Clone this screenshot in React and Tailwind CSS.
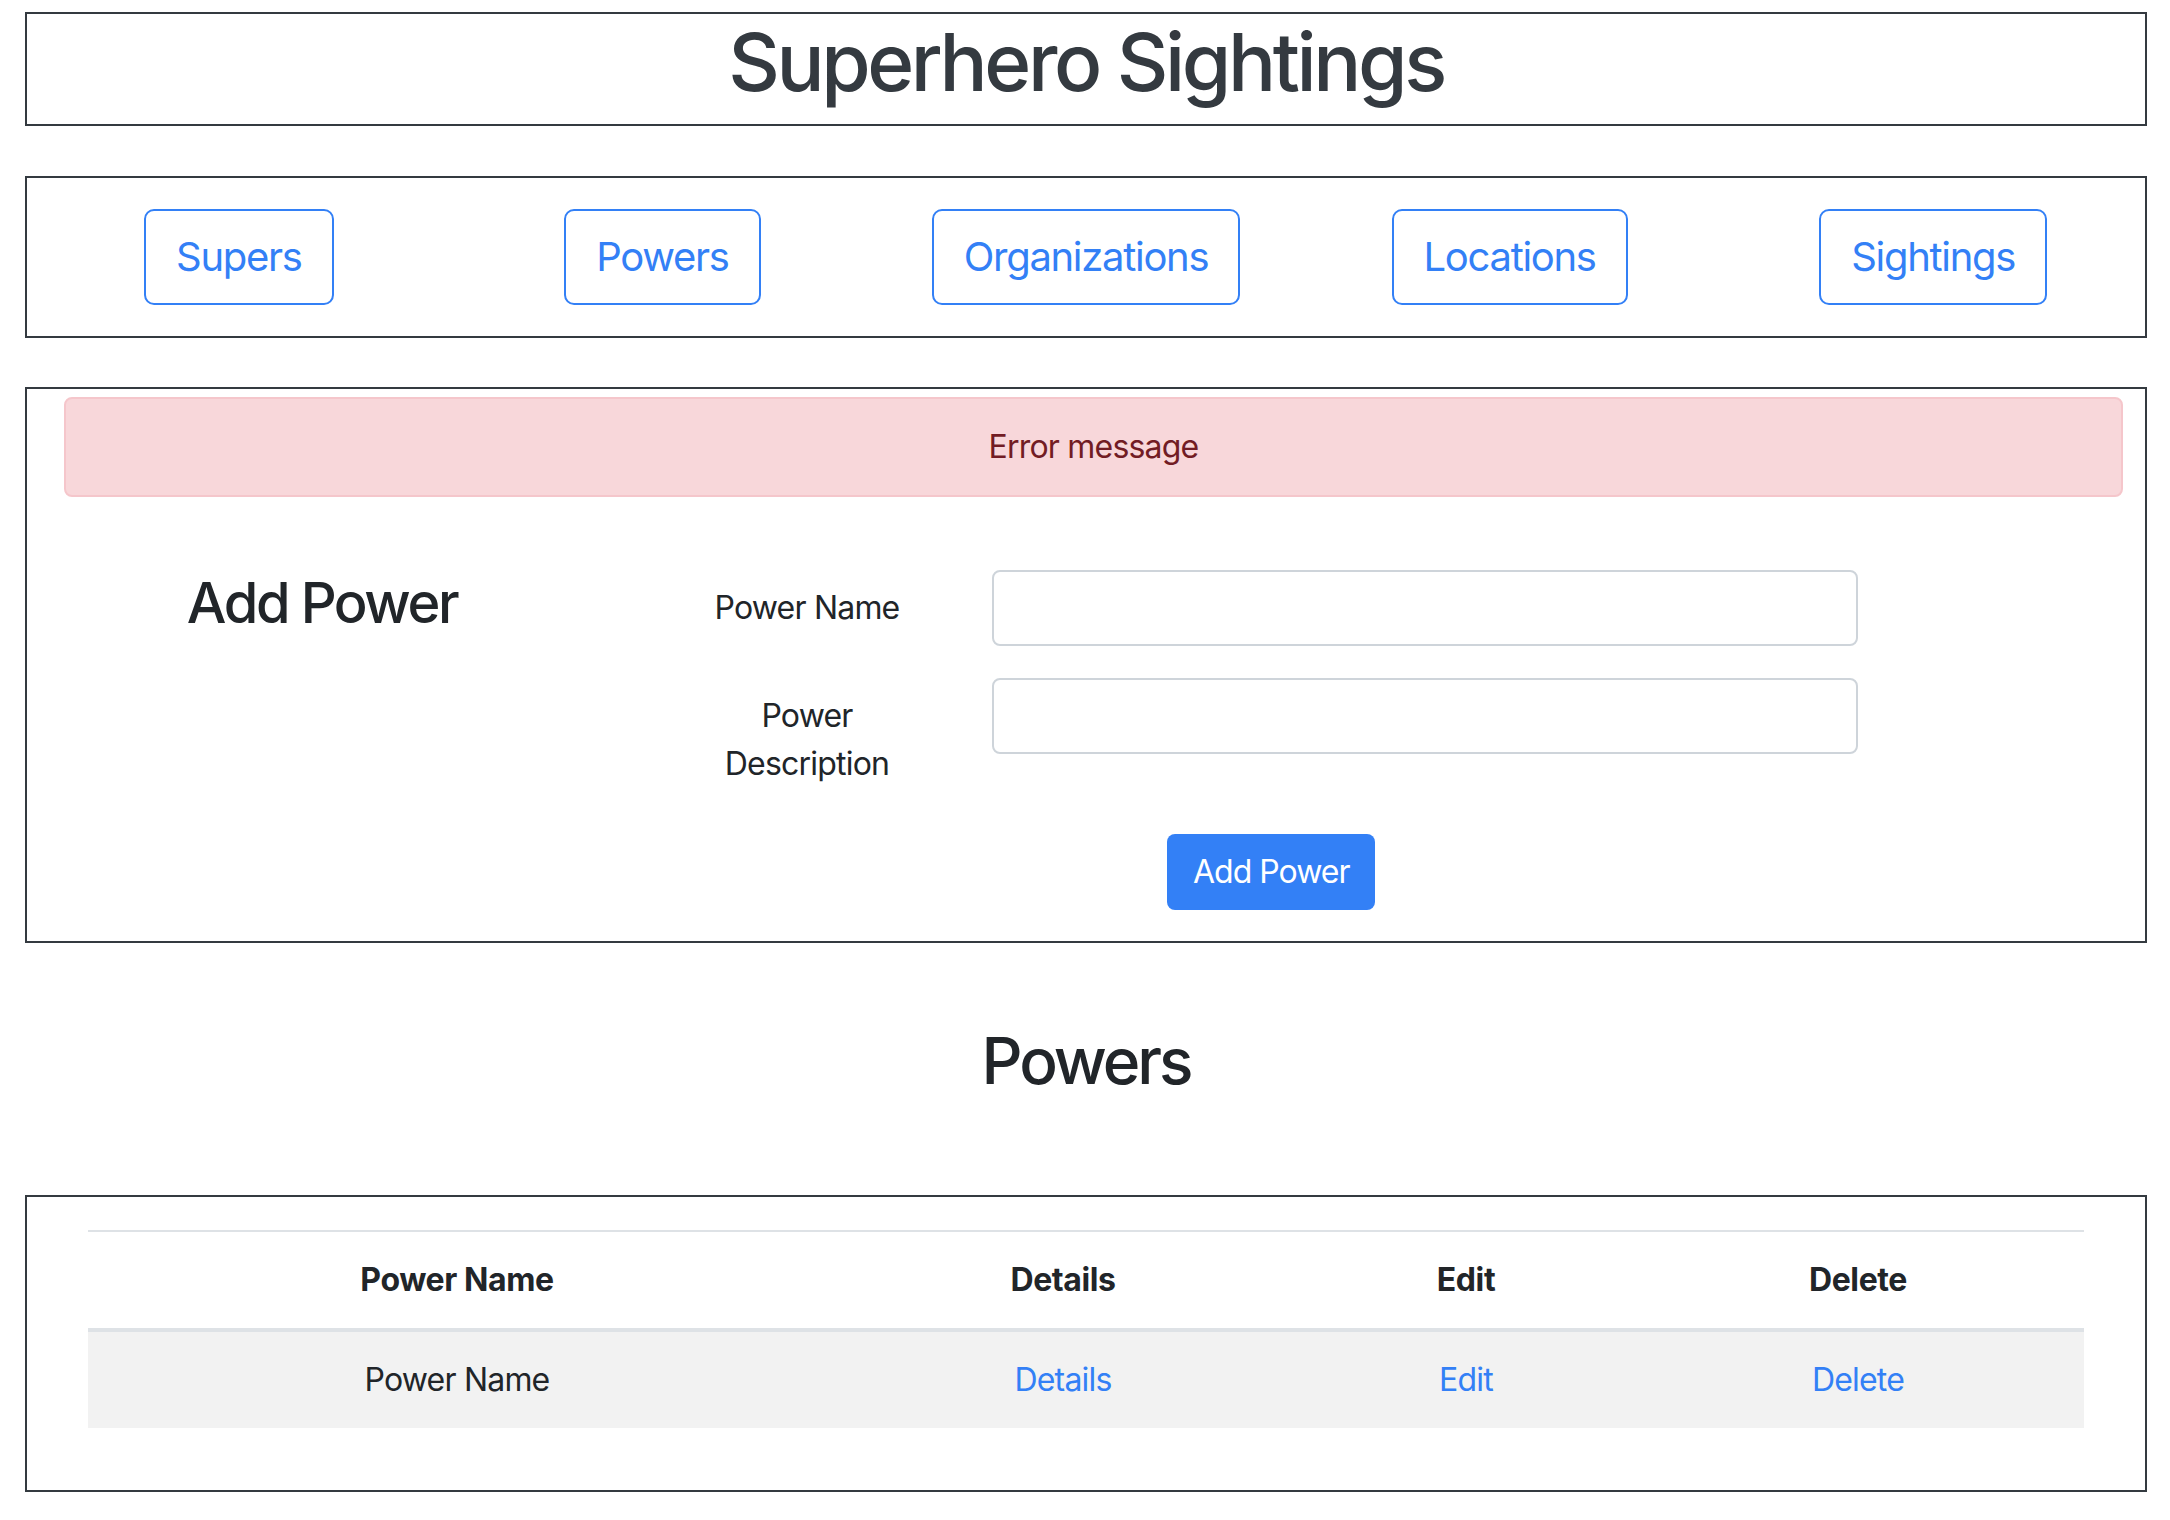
import React from "react";

const navItems = ["Supers", "Powers", "Organizations", "Locations", "Sightings"];

export default function App() {
  return (
    <div className="min-h-[1520px] bg-white pl-[25px] pr-[23px] pt-[12px] pb-[27px] font-[Inter,sans-serif] text-[#212529] tracking-[-0.8px]">
      {/* Header */}
      <div className="border-2 border-[#343a40] pb-[14px]">
        <h1 className="text-center text-[80px] leading-[96px] font-medium text-[#343a40] tracking-[-3.4px]">
          Superhero Sightings
        </h1>
      </div>

      {/* Navigation */}
      <div className="mt-[50px] border-2 border-[#343a40] py-[31px] grid grid-cols-5">
        {navItems.map((item) => (
          <div key={item} className="flex justify-center">
            <button className="rounded-[10px] border-2 border-[#3380f6] px-[30px] py-[16px] text-[40px] leading-[60px] tracking-[-1.3px] text-[#3380f6] bg-white">
              {item}
            </button>
          </div>
        ))}
      </div>

      {/* Add Power form */}
      <div className="mt-[49px] border-2 border-[#343a40] pt-[8px] pb-[31px]">
        <div className="ml-[37px] mr-[22px] rounded-[8px] border-2 border-[#f5c6cb] bg-[#f8d7da] py-[24px] text-center text-[32px] leading-[48px] text-[#721c24]">
          Error message
        </div>

        <div className="mt-[73px] ml-[37px] flex">
          <div className="w-[516px] shrink-0 text-center">
            <h3 className="text-[56px] leading-[67px] font-medium tracking-[-2.4px]">Add Power</h3>
          </div>
          <div className="flex flex-col">
            <div className="flex items-start">
              <label className="ml-[117px] w-[220px] shrink-0 pt-[14px] text-center text-[32px] leading-[48px]">
                Power Name
              </label>
              <input
                type="text"
                className="ml-[75px] h-[76px] w-[866px] rounded-[8px] border-2 border-[#ced4da] bg-white px-[24px] text-[32px]"
              />
            </div>
            <div className="mt-[32px] flex items-start">
              <label className="ml-[117px] w-[220px] shrink-0 py-[14px] text-center text-[32px] leading-[48px]">
                Power Description
              </label>
              <input
                type="text"
                className="ml-[75px] h-[76px] w-[866px] rounded-[8px] border-2 border-[#ced4da] bg-white px-[24px] text-[32px]"
              />
            </div>
            <div className="mt-[32px] flex">
              <button className="ml-[587px] h-[76px] rounded-[8px] bg-[#3380f6] px-[26px] text-[32px] leading-[48px] tracking-[-1px] text-white">
                Add Power
              </button>
            </div>
          </div>
        </div>
      </div>

      {/* Powers heading */}
      <h2 className="mt-[79px] text-center text-[64px] leading-[77px] font-medium tracking-[-3px]">Powers</h2>

      {/* Table */}
      <div className="mt-[96px] border-2 border-[#343a40] pt-[33px] pb-[62px] pl-[61px] pr-[61px]">
        <table className="w-[1996px] table-fixed border-separate border-spacing-0 text-center text-[32px] leading-[48px]">
          <thead>
            <tr>
              <th className="w-[738px] border-t-2 border-b-4 border-[#dee2e6] py-[24px] font-bold tracking-[-0.4px]">Power Name</th>
              <th className="w-[474px] border-t-2 border-b-4 border-[#dee2e6] py-[24px] font-bold tracking-[-0.4px]">Details</th>
              <th className="w-[332px] border-t-2 border-b-4 border-[#dee2e6] py-[24px] font-bold tracking-[-0.4px]">Edit</th>
              <th className="w-[452px] border-t-2 border-b-4 border-[#dee2e6] py-[24px] font-bold tracking-[-0.4px]">Delete</th>
            </tr>
          </thead>
          <tbody>
            <tr className="bg-[#f2f2f2]">
              <td className="py-[24px]">Power Name</td>
              <td className="py-[24px]">
                <a href="#" className="text-[#3380f6]">Details</a>
              </td>
              <td className="py-[24px]">
                <a href="#" className="text-[#3380f6]">Edit</a>
              </td>
              <td className="py-[24px]">
                <a href="#" className="text-[#3380f6]">Delete</a>
              </td>
            </tr>
          </tbody>
        </table>
      </div>
    </div>
  );
}
